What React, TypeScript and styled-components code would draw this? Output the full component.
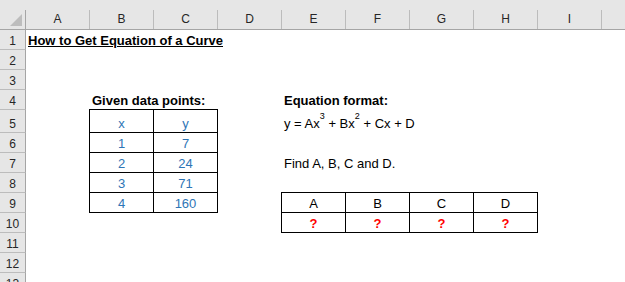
import React from 'react';
import styled, { createGlobalStyle } from 'styled-components';

const GlobalStyle = createGlobalStyle`
  *, *::before, *::after { box-sizing: border-box; }
  html, body { margin: 0; padding: 0; background: #ffffff; overflow: hidden; }
  body { font-family: "Liberation Sans", Arial, sans-serif; }
`;

const HEADER_BG = '#e6e6e6';
const HEADER_EDGE = '#a5a5a5';
const HEADER_RULE = '#bcbcbc';

const Sheet = styled.div`
  display: grid;
  grid-template-columns: 26px repeat(9, 64px) 1fr;
  grid-template-rows: 30px repeat(4, 20px) 23px repeat(8, 20px);
  width: 625px;
  height: 282px;
  overflow: hidden;
  background: #ffffff;
  color: #000000;
  font-size: 13px;
`;

const Corner = styled.div`
  grid-column: 1;
  grid-row: 1;
  display: flex;
  padding-top: 10px;
  background: ${HEADER_BG};
  border-bottom: 1px solid ${HEADER_EDGE};
`;

const CornerMark = styled.div`
  flex: 1;
  display: flex;
  align-items: flex-end;
  justify-content: flex-end;
  padding: 0 3px 3px 0;
  border-right: 1px solid ${HEADER_EDGE};
`;

const ColumnHeader = styled.div`
  display: flex;
  padding-top: 10px;
  background: ${HEADER_BG};
  border-bottom: 1px solid ${HEADER_EDGE};
`;

const ColumnLabel = styled.div<{ $last?: boolean }>`
  flex: 1;
  display: flex;
  align-items: flex-end;
  justify-content: center;
  padding-bottom: 3px;
  border-right: ${p => (p.$last ? 'none' : `1px solid ${HEADER_RULE}`)};
  color: #262626;
  font-size: 12px;
  line-height: 14px;
`;

const RowHeader = styled.div<{ $row: number }>`
  grid-column: 1;
  grid-row: ${p => p.$row + 1};
  display: flex;
  align-items: flex-end;
  justify-content: center;
  padding-bottom: 1px;
  background: ${HEADER_BG};
  border-right: 1px solid ${HEADER_EDGE};
  border-bottom: 1px solid ${HEADER_RULE};
  color: #262626;
  font-size: 12px;
  line-height: 14px;
`;

type Tone = 'ink' | 'blue' | 'red';
const TONES: Record<Tone, string> = { ink: '#000000', blue: '#2e75b6', red: '#ff0000' };

const Cell = styled.div<{
  $col: number;
  $row: number;
  $span?: number;
  $bold?: boolean;
  $center?: boolean;
  $tone?: Tone;
  $underline?: boolean;
}>`
  grid-column: ${p => p.$col + 1} / span ${p => p.$span ?? 1};
  grid-row: ${p => p.$row + 1};
  display: flex;
  align-items: flex-end;
  justify-content: ${p => (p.$center ? 'center' : 'flex-start')};
  padding: 0 2px 2px;
  line-height: 15px;
  white-space: nowrap;
  font-weight: ${p => (p.$bold ? 700 : 400)};
  color: ${p => TONES[p.$tone ?? 'ink']};
  text-decoration: ${p => (p.$underline ? 'underline' : 'none')};
`;

const BoxCell = styled(Cell)<{ $edgeLeft?: boolean; $edgeTop?: boolean }>`
  padding-bottom: 1px;
  border-right: 1px solid #000000;
  border-bottom: 1px solid #000000;
  box-shadow: ${p =>
    [
      p.$edgeLeft ? '-1px 0 0 #000000' : '',
      p.$edgeTop ? '0 -1px 0 #000000' : '',
      p.$edgeLeft && p.$edgeTop ? '-1px -1px 0 #000000' : '',
    ]
      .filter(Boolean)
      .join(', ') || 'none'};
`;

const Sup = styled.sup`
  font-size: 9px;
  line-height: 0;
  vertical-align: 9px;
`;

const COLUMNS = ['A', 'B', 'C', 'D', 'E', 'F', 'G', 'H', 'I', ''];
const ROW_COUNT = 13;

const POINTS: [string, string][] = [
  ['x', 'y'],
  ['1', '7'],
  ['2', '24'],
  ['3', '71'],
  ['4', '160'],
];

const COEFFICIENTS = ['A', 'B', 'C', 'D'];

export default function App() {
  return (
    <>
      <GlobalStyle />
      <Sheet>
        <Corner>
          <CornerMark>
            <svg width="12" height="12" viewBox="0 0 12 12">
              <polygon points="12,0 12,12 0,12" fill="#bdbdbd" />
            </svg>
          </CornerMark>
        </Corner>
        {COLUMNS.map((c, i) => (
          <ColumnHeader key={`col-${i}`}>
            <ColumnLabel $last={i === COLUMNS.length - 1}>{c}</ColumnLabel>
          </ColumnHeader>
        ))}
        {Array.from({ length: ROW_COUNT }, (_, i) => (
          <RowHeader key={`row-${i}`} $row={i + 1}>
            {i + 1}
          </RowHeader>
        ))}

        <Cell $col={1} $row={1} $span={4} $bold $underline>
          How to Get Equation of a Curve
        </Cell>

        <Cell $col={2} $row={4} $span={2} $bold>
          Given data points:
        </Cell>
        {POINTS.map(([x, y], r) => (
          <React.Fragment key={`pt-${r}`}>
            <BoxCell $col={2} $row={5 + r} $center $tone="blue" $edgeLeft $edgeTop={r === 0}>
              {x}
            </BoxCell>
            <BoxCell $col={3} $row={5 + r} $center $tone="blue" $edgeTop={r === 0}>
              {y}
            </BoxCell>
          </React.Fragment>
        ))}

        <Cell $col={5} $row={4} $span={3} $bold>
          Equation format:
        </Cell>
        <Cell $col={5} $row={5} $span={3}>
          <span>
            y = Ax<Sup>3</Sup> + Bx<Sup>2</Sup> + Cx + D
          </span>
        </Cell>
        <Cell $col={5} $row={7} $span={3}>
          Find A, B, C and D.
        </Cell>

        {COEFFICIENTS.map((name, i) => (
          <React.Fragment key={`coef-${name}`}>
            <BoxCell $col={5 + i} $row={9} $center $edgeLeft={i === 0} $edgeTop>
              {name}
            </BoxCell>
            <BoxCell $col={5 + i} $row={10} $center $tone="red" $bold $edgeLeft={i === 0}>
              ?
            </BoxCell>
          </React.Fragment>
        ))}
      </Sheet>
    </>
  );
}
